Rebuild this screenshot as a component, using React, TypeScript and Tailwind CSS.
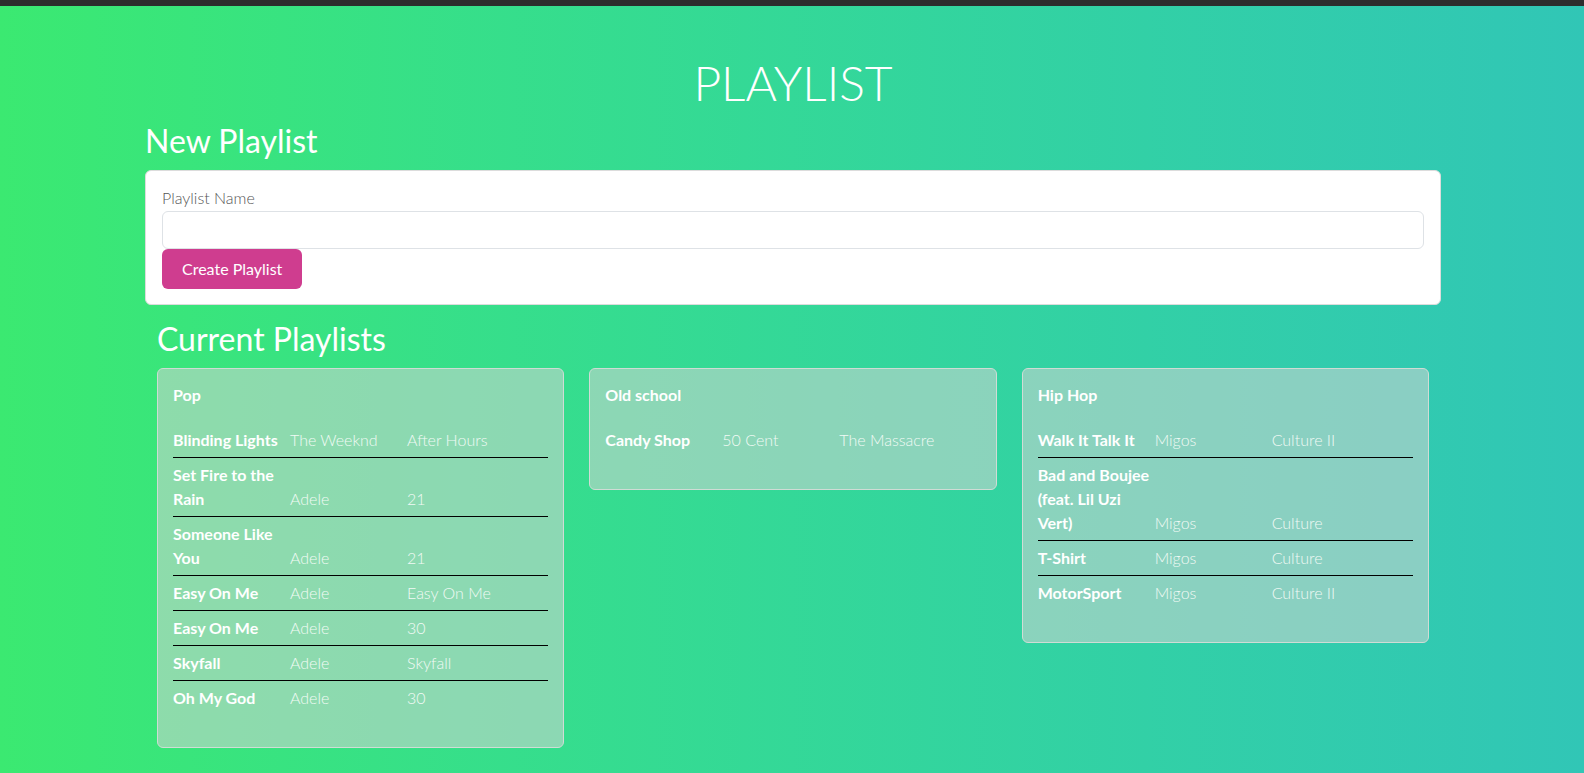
import { useState } from 'react';

type Song = { title: string; artist: string; album: string };
type Playlist = { id: number; name: string; songs: Song[] };

const playlists: Playlist[] = [
  {
    id: 1,
    name: 'Pop',
    songs: [
      { title: 'Blinding Lights', artist: 'The Weeknd', album: 'After Hours' },
      { title: 'Set Fire to the Rain', artist: 'Adele', album: '21' },
      { title: 'Someone Like You', artist: 'Adele', album: '21' },
      { title: 'Easy On Me', artist: 'Adele', album: 'Easy On Me' },
      { title: 'Easy On Me', artist: 'Adele', album: '30' },
      { title: 'Skyfall', artist: 'Adele', album: 'Skyfall' },
      { title: 'Oh My God', artist: 'Adele', album: '30' },
    ],
  },
  {
    id: 2,
    name: 'Old school',
    songs: [{ title: 'Candy Shop', artist: '50 Cent', album: 'The Massacre' }],
  },
  {
    id: 3,
    name: 'Hip Hop',
    songs: [
      { title: 'Walk It Talk It', artist: 'Migos', album: 'Culture II' },
      { title: 'Bad and Boujee (feat. Lil Uzi Vert)', artist: 'Migos', album: 'Culture' },
      { title: 'T-Shirt', artist: 'Migos', album: 'Culture' },
      { title: 'MotorSport', artist: 'Migos', album: 'Culture II' },
    ],
  },
];

function PlaylistCard({ playlist }: { playlist: Playlist }) {
  return (
    <div className="rounded-md border border-[#cfdcd5] bg-[rgba(211,211,211,0.55)] px-[15px] pt-4 pb-[32px] text-white">
      <h5 className="mb-[18px] text-base leading-[1.2] font-bold">{playlist.name}</h5>
      <div>
        {playlist.songs.map((song, i) => (
          <div
            key={i}
            className={`grid grid-cols-[117px_117px_1fr] py-[5px] text-base leading-6 ${
              i < playlist.songs.length - 1 ? 'border-b border-black' : ''
            }`}
          >
            <div className="flex items-end pr-1 font-bold">{song.title}</div>
            <div className="flex items-end font-light text-[#f1faf5]">{song.artist}</div>
            <div className="flex items-end font-light text-[#f1faf5]">{song.album}</div>
          </div>
        ))}
      </div>
    </div>
  );
}

export default function App() {
  const [name, setName] = useState('');

  return (
    <div className="min-h-screen bg-linear-to-r from-[#3be971] to-[#31c6b6] font-['Lato','Liberation_Sans',sans-serif] text-white">
      <div className="h-[6px] bg-[#2d2d2d]" />
      <div className="mx-auto w-[1296px] translate-x-px pt-12 pb-6">
        <h1 className="text-center text-[48px] leading-[1.2] font-light">PLAYLIST</h1>
        <h2 className="mt-[10px] text-[32px] leading-[1.2]">New Playlist</h2>

        <div className="mt-[10px] rounded-md border border-[#dcdcdc] bg-white px-4 pt-[15px] pb-[15px]">
          <label className="block text-base leading-6 font-light text-[#555]">Playlist Name</label>
          <input
            value={name}
            onChange={e => setName(e.target.value)}
            className="mt-px block h-[38px] w-full rounded-md border border-[#dee2e6] px-3 text-[#333] outline-none"
          />
          <button className="h-10 rounded-md bg-[#cf3d8f] px-5 text-base text-white">
            Create Playlist
          </button>
        </div>

        <div className="mt-[15px] px-3">
          <h3 className="text-[32px] leading-[1.2]">Current Playlists</h3>
          <div className="mt-[10px] grid grid-cols-3 items-start gap-[25px]">
            {playlists.map(p => (
              <PlaylistCard key={p.id} playlist={p} />
            ))}
          </div>
        </div>
      </div>
    </div>
  );
}
